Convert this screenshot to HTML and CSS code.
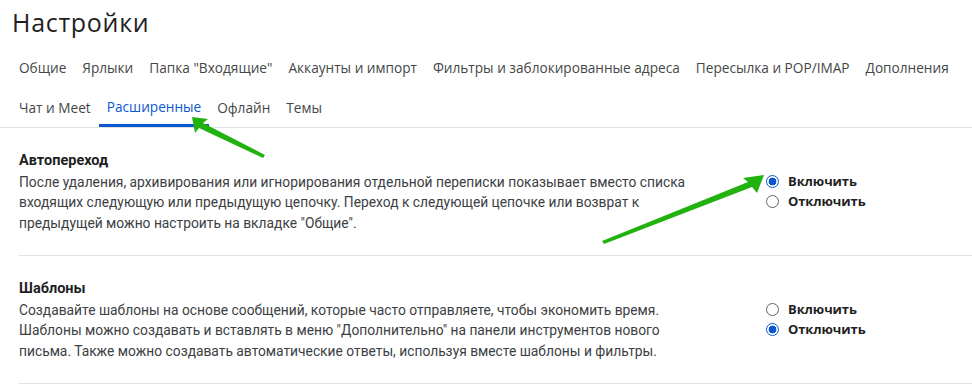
FILE: index.html
```html
<!DOCTYPE html>
<html lang="ru">
<head>
<meta charset="utf-8">
<title>Настройки</title>
<link rel="stylesheet" href="styles.css">
</head>
<body>
<div class="page">
  <h1 class="title">Настройки</h1>
  <nav class="tabs">
    <div class="tab-row">
      <span class="tab">Общие</span>
      <span class="tab">Ярлыки</span>
      <span class="tab">Папка "Входящие"</span>
      <span class="tab">Аккаунты и импорт</span>
      <span class="tab">Фильтры и заблокированные адреса</span>
      <span class="tab">Пересылка и POP/IMAP</span>
      <span class="tab">Дополнения</span>
    </div>
    <div class="tab-row second">
      <span class="tab">Чат и Meet</span>
      <span class="tab active">Расширенные</span>
      <span class="tab">Офлайн</span>
      <span class="tab">Темы</span>
    </div>
  </nav>

  <section class="setting">
    <div class="setting-text">
      <div class="setting-title">Автопереход</div>
      <div class="setting-desc">После удаления, архивирования или игнорирования отдельной переписки показывает вместо списка<br>входящих следующую или предыдущую цепочку. Переход к следующей цепочке или возврат к<br>предыдущей можно настроить на вкладке "Общие".</div>
    </div>
    <div class="radios">
      <label class="radio"><span class="dot checked"></span>Включить</label>
      <label class="radio"><span class="dot"></span>Отключить</label>
    </div>
  </section>

  <section class="setting">
    <div class="setting-text">
      <div class="setting-title">Шаблоны</div>
      <div class="setting-desc">Создавайте шаблоны на основе сообщений, которые часто отправляете, чтобы экономить время.<br>Шаблоны можно создавать и вставлять в меню "Дополнительно" на панели инструментов нового<br>письма. Также можно создавать автоматические ответы, используя вместе шаблоны и фильтры.</div>
    </div>
    <div class="radios">
      <label class="radio"><span class="dot"></span>Включить</label>
      <label class="radio"><span class="dot checked"></span>Отключить</label>
    </div>
  </section>

  <svg class="arrows" width="972" height="386" viewBox="0 0 972 386">
    <polygon fill="#22b20f" points="192,117 208,119 203,123 265,155 263,158 199,128 195,133"/>
    <polygon fill="#22b20f" points="764,175 757,193 752,187 604,244 602,241 748,182 743,178"/>
  </svg>
</div>
</body>
</html>
```
FILE: styles.css
```css
* { box-sizing: border-box; }
html, body { margin: 0; padding: 0; background: #fff; }
body {
  font-family: Roboto, "Liberation Sans", sans-serif;
  color: #1f1f1f;
  width: 972px;
  height: 386px;
  overflow: hidden;
}
.page { position: relative; }
.title {
  margin: 0;
  height: 48px;
  padding-left: 12px;
  font-family: "Open Sans", Roboto, sans-serif;
  font-weight: 400;
  font-size: 25px;
  letter-spacing: 0.7px;
  line-height: 44px;
  color: #1f1f1f;
}
.tabs {
  padding-left: 11px;
  border-bottom: 1px solid #e3e3e3;
}
.tab-row { display: flex; height: 39px; }
.tab-row.second { height: 40px; }
.tab {
  display: flex;
  align-items: center;
  padding: 0 8px;
  font-family: "Open Sans", Roboto, sans-serif;
  font-size: 13.65px;
  color: #444746;
  white-space: nowrap;
}
.tab.active {
  color: #0b57d0;
  border-bottom: 3px solid #0b57d0;
  padding-top: 1px;
}
.setting {
  display: flex;
  margin-left: 19px;
  padding: 23px 0 22px;
  border-bottom: 1px solid #e3e3e3;
}
.setting-text { width: 747px; }
.setting-title {
  font-weight: 700;
  font-size: 14.5px;
  line-height: 20.5px;
  color: #1f1f1f;
}
.setting-desc {
  font-size: 13.8px;
  line-height: 20.5px;
  color: #3c4043;
}
.radios {
  padding-top: 20px;
  display: flex;
  flex-direction: column;
}
.radio {
  display: flex;
  align-items: center;
  height: 20px;
  font-family: "Open Sans", Roboto, sans-serif;
  font-weight: 700;
  font-size: 13px;
  letter-spacing: -0.1px;
  color: #1f1f1f;
}
.dot {
  width: 13px;
  height: 13px;
  border-radius: 50%;
  border: 1px solid #5f6368;
  margin-right: 9px;
  display: inline-block;
  flex: none;
}
.dot.checked {
  border: 1.5px solid #0b57d0;
  background: radial-gradient(circle, #0b57d0 0 3.6px, #fff 4.2px);
}
.arrows {
  position: absolute;
  left: 0;
  top: 0;
  pointer-events: none;
}
```
